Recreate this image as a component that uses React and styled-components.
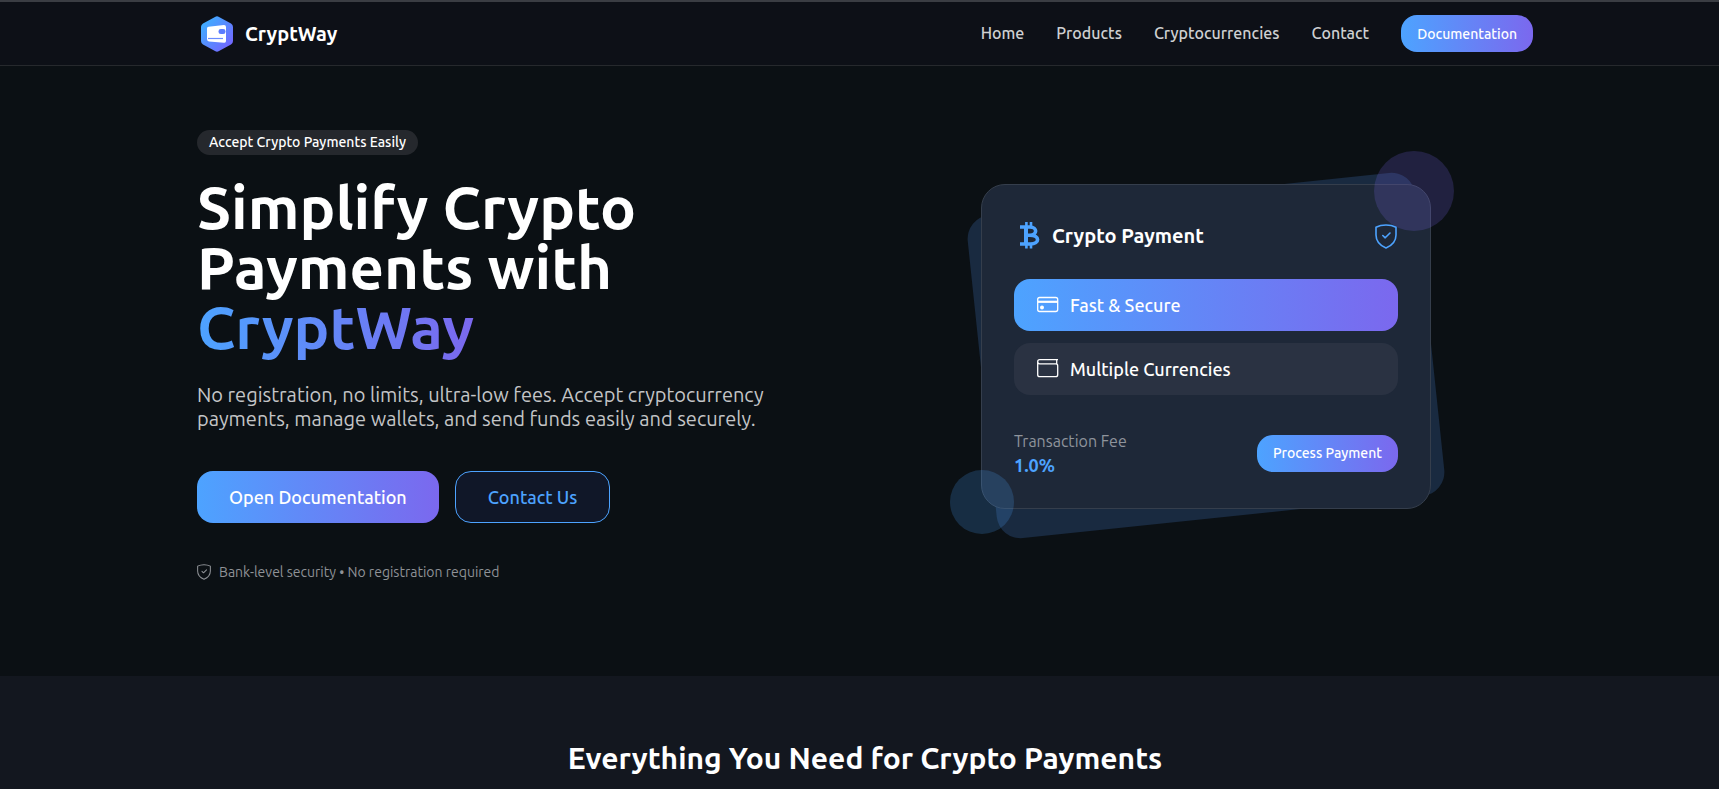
import React from "react";
import styled, { createGlobalStyle } from "styled-components";

const GlobalStyle = createGlobalStyle`
  * {
    box-sizing: border-box;
  }

  body {
    margin: 0;
    background: #0b0f14;
    color: #ffffff;
    font-family: Ubuntu, "Noto Sans", "Open Sans", sans-serif;
    font-size: 16px;
    line-height: 24px;
    overflow-x: hidden;
  }
`;

const gradient = "linear-gradient(90deg, #4da3ff 0%, #7b68ee 100%)";

const Header = styled.header`
  padding-left: 11px;
  background: #0d1017;
  border-top: 2px solid #3a3d43;
  border-bottom: 1px solid #26292d;
`;

const Container = styled.div`
  width: 100%;
  max-width: 1400px;
  margin: 0 auto;
  padding: 0 32px;
`;

const HeaderRow = styled(Container)`
  display: flex;
  align-items: center;
  justify-content: space-between;
  height: 63px;
`;

const Brand = styled.a`
  display: flex;
  align-items: center;
  gap: 8px;
  color: #ffffff;
  font-size: 20px;
  font-weight: 600;
  text-decoration: none;
`;

const Nav = styled.nav`
  display: flex;
  align-items: center;
  gap: 32px;
`;

const NavLink = styled.a`
  padding-bottom: 2px;
  color: #cfd0d2;
  font-size: 16px;
  font-weight: 500;
  text-decoration: none;
`;

const Button = styled.button`
  height: ${({ $large }) => ($large ? 52 : 37)}px;
  padding: 0 ${({ $large }) => ($large ? 32 : 16)}px;
  border: ${({ $outline }) => ($outline ? "1px solid #4da3ff" : "0")};
  border-radius: 16px;
  background: ${({ $outline }) => ($outline ? "#101728" : gradient)};
  color: ${({ $outline }) => ($outline ? "#4da3ff" : "#ffffff")};
  font-family: inherit;
  font-size: ${({ $large }) => ($large ? 18 : 14)}px;
  font-weight: 500;
  cursor: pointer;
`;

const Hero = styled.section`
  padding-left: 11px;
  background: #0b1014;
`;

const HeroGrid = styled(Container)`
  display: grid;
  grid-template-columns: 1fr 1fr;
  gap: 28px;
  padding-top: 64px;
  padding-bottom: 92px;
`;

const Copy = styled.div`
  display: flex;
  flex-direction: column;
  align-items: flex-start;
`;

const Badge = styled.span`
  padding: 0 12px;
  border-radius: 16px;
  background: #25282d;
  font-size: 14px;
  font-weight: 500;
  line-height: 25px;
`;

const Headline = styled.h1`
  margin: 22px 0 0;
  font-size: 60px;
  font-weight: 600;
  line-height: 60px;
`;

/* extra room below keeps the descenders inside the clipped gradient */
const Highlight = styled.span`
  display: block;
  width: fit-content;
  margin-bottom: -8px;
  padding-bottom: 8px;
  background: ${gradient};
  background-clip: text;
  color: transparent;
`;

const Lead = styled.p`
  max-width: 600px;
  margin: 26px 0 0;
  color: #c4c5c7;
  font-size: 20px;
  font-weight: 400;
  line-height: 24px;
`;

const Actions = styled.div`
  display: flex;
  gap: 16px;
  margin-top: 40px;
`;

const Note = styled.p`
  display: flex;
  align-items: center;
  gap: 8px;
  margin: 37px 0 0;
  color: #8f9297;
  font-size: 14px;
`;

const Visual = styled.div`
  display: flex;
  align-items: flex-start;
  justify-content: center;
  padding-top: 54px;
`;

const CardStack = styled.div`
  position: relative;
  width: 450px;
`;

const CardShadow = styled.div`
  position: absolute;
  inset: 9px 0 -9px;
  border-radius: 24px;
  background: #192a40;
  transform: rotate(-6deg);
`;

const Circle = styled.div`
  position: absolute;
  width: ${({ $size }) => $size}px;
  height: ${({ $size }) => $size}px;
  border-radius: 50%;
`;

const TopCircle = styled(Circle)`
  top: -33px;
  right: -23px;
  background: rgba(123, 104, 238, 0.2);
`;

const BottomCircle = styled(Circle)`
  bottom: -25px;
  left: -31px;
  background: rgba(77, 163, 255, 0.2);
`;

const Card = styled.div`
  position: relative;
  padding: 32px 32px 31px;
  border: 1px solid #353e4c;
  border-radius: 24px;
  background: #1e2838;
`;

const CardHead = styled.div`
  display: flex;
  align-items: center;
  justify-content: space-between;
  height: 38px;
  color: #4da3ff;
`;

const CardTitle = styled.h2`
  display: flex;
  align-items: center;
  gap: 8px;
  margin: 0;
  color: #ffffff;
  font-size: 20px;
  font-weight: 600;
`;

const Options = styled.ul`
  display: grid;
  gap: 12px;
  margin: 24px 0 34px;
  padding: 0;
  list-style: none;
`;

const Option = styled.li`
  display: flex;
  align-items: center;
  gap: 10px;
  height: 52px;
  padding: 0 22px;
  border-radius: 16px;
  background: ${({ $active }) => ($active ? gradient : "#2a3242")};
  font-size: 18px;
  font-weight: 500;
`;

const CardFoot = styled.div`
  display: flex;
  align-items: center;
  justify-content: space-between;
`;

const FeeLabel = styled.div`
  color: #8f949c;
  font-size: 16px;
`;

const FeeValue = styled.div`
  color: #4da3ff;
  font-size: 18px;
  font-weight: 600;
`;

const Features = styled.section`
  padding-left: 11px;
  background: #13171f;
`;

const FeaturesInner = styled(Container)`
  padding-top: 64px;
  padding-bottom: 64px;
`;

const SectionTitle = styled.h2`
  margin: 0;
  font-size: 30px;
  font-weight: 600;
  line-height: 36px;
  text-align: center;
`;

const Logo = () => (
  <svg width="40" height="40" viewBox="0 0 40 40" aria-hidden="true">
    <defs>
      <linearGradient id="logo" x1="0" y1="0" x2="1" y2="1">
        <stop offset="0" stopColor="#36b8ff" />
        <stop offset="1" stopColor="#7b5cff" />
      </linearGradient>
    </defs>
    <path
      d="M18 3Q20 1.500 22 3L34 9.500Q36 10.500 36 13V27Q36 29.500 34 30.500L22 37Q20 38.500 18 37L6 30.500Q4 29.500 4 27V13Q4 10.500 6 9.500Z"
      fill="url(#logo)"
    />
    <path
      d="M11.500 12.800L27 11Q29 11 29 13V27Q29 29 27 28.700L12 27.500Q10 27.200 10 25V14.500Q10 13 11.500 12.800Z"
      fill="#fff"
    />
    <path d="M11 24.500H26" stroke="#6b8cff" strokeWidth="1.200" />
    <rect x="21.500" y="15" width="7" height="5" rx="2.300" fill="#5b7cff" />
  </svg>
);

const ShieldIcon = ({ width, height, stroke = 1.4 }) => (
  <svg
    width={width}
    height={height}
    viewBox="0 0 22 25"
    fill="none"
    stroke="currentColor"
    strokeWidth={stroke}
    strokeLinejoin="round"
    strokeLinecap="round"
    aria-hidden="true"
  >
    <path d="M11 1C14.500 1 18 1.700 21 3.300V11C21 17 17 21.500 11 24C5 21.500 1 17 1 11V3.300C4 1.700 7.500 1 11 1Z" />
    <path d="M7.800 11.500L10.200 13.800L15 9" />
  </svg>
);

const BitcoinIcon = () => (
  <svg
    width="30"
    height="30"
    viewBox="0 0 30 30"
    fill="none"
    stroke="#4da3ff"
    aria-hidden="true"
  >
    <path
      d="M6 6H16C23.500 6 23.500 14.200 16 14.200H11M16 14.200C26 14.200 26 23 16.500 23H6"
      strokeWidth="3.600"
    />
    <path d="M12 5V24" strokeWidth="4" />
    <path d="M12.400 1V5M17 1V5M12.400 24V27.500M17 24V27.500" strokeWidth="2.600" />
  </svg>
);

const CardIcon = () => (
  <svg
    width="24"
    height="24"
    viewBox="0 0 24 24"
    fill="none"
    stroke="#fff"
    strokeWidth="1.300"
    aria-hidden="true"
  >
    <rect x="1.700" y="4.500" width="20" height="14" rx="2" />
    <path d="M2 8.800H22" strokeWidth="2.200" />
    <circle cx="6" cy="14.500" r="2" fill="#fff" stroke="none" />
  </svg>
);

const WalletIcon = () => (
  <svg
    width="24"
    height="24"
    viewBox="0 0 24 24"
    fill="none"
    stroke="#fff"
    strokeWidth="1.300"
    aria-hidden="true"
  >
    <path d="M22 2.700H3.700Q1.700 2.700 1.700 4.700V17.700Q1.700 19.700 3.700 19.700H19.700Q21.700 19.700 21.700 17.700V8.700Q21.700 6.800 19.700 6.800H3.700Q1.700 6.800 1.700 4.700M20.700 2.700V6.800" />
  </svg>
);

const navItems = ["Home", "Products", "Cryptocurrencies", "Contact"];

const App = () => {
  return (
    <>
      <GlobalStyle />
      <Header>
        <HeaderRow>
          <Brand href="#home">
            <Logo />
            CryptWay
          </Brand>
          <Nav>
            {navItems.map((item) => (
              <NavLink key={item} href={`#${item.toLowerCase()}`}>
                {item}
              </NavLink>
            ))}
            <Button>Documentation</Button>
          </Nav>
        </HeaderRow>
      </Header>
      <main>
        <Hero>
          <HeroGrid>
            <Copy>
              <Badge>Accept Crypto Payments Easily</Badge>
              <Headline>
                Simplify Crypto
                <br />
                Payments with
                <Highlight>CryptWay</Highlight>
              </Headline>
              <Lead>
                No registration, no limits, ultra-low fees. Accept
                cryptocurrency payments, manage wallets, and send funds easily
                and securely.
              </Lead>
              <Actions>
                <Button $large>Open Documentation</Button>
                <Button $large $outline>
                  Contact Us
                </Button>
              </Actions>
              <Note>
                <ShieldIcon width={14} height={16} stroke={1.6} />
                Bank-level security • No registration required
              </Note>
            </Copy>
            <Visual>
              <CardStack>
                <CardShadow />
                <Card>
                  <CardHead>
                    <CardTitle>
                      <BitcoinIcon />
                      Crypto Payment
                    </CardTitle>
                    <ShieldIcon width={24} height={25} stroke={1.6} />
                  </CardHead>
                  <Options>
                    <Option $active>
                      <CardIcon />
                      Fast &amp; Secure
                    </Option>
                    <Option>
                      <WalletIcon />
                      Multiple Currencies
                    </Option>
                  </Options>
                  <CardFoot>
                    <div>
                      <FeeLabel>Transaction Fee</FeeLabel>
                      <FeeValue>1.0%</FeeValue>
                    </div>
                    <Button>Process Payment</Button>
                  </CardFoot>
                </Card>
                <TopCircle $size={80} />
                <BottomCircle $size={64} />
              </CardStack>
            </Visual>
          </HeroGrid>
        </Hero>
        <Features>
          <FeaturesInner>
            <SectionTitle>Everything You Need for Crypto Payments</SectionTitle>
          </FeaturesInner>
        </Features>
      </main>
    </>
  );
};

export default App;
